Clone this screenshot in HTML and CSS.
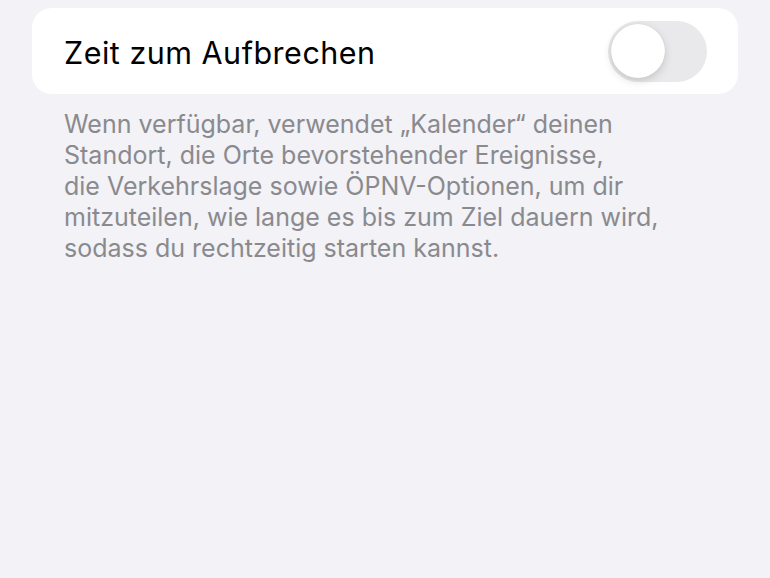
FILE: index.html
```html
<!DOCTYPE html>
<html lang="de">
<head>
<meta charset="utf-8">
<link rel="stylesheet" href="styles.css">
</head>
<body>
<main class="page">
  <section class="card">
    <span class="label">Zeit zum Aufbrechen</span>
    <span class="toggle"><span class="knob"></span></span>
  </section>
  <p class="footer">Wenn verfügbar, verwendet „Kalender“ deinen<br>Standort, die Orte bevorstehender Ereignisse,<br>die Verkehrslage sowie ÖPNV-Optionen, um dir<br>mitzuteilen, wie lange es bis zum Ziel dauern wird,<br>sodass du rechtzeitig starten kannst.</p>
</main>
</body>
</html>
```
FILE: styles.css
```css
html, body {
  margin: 0;
  padding: 0;
  background: #f2f2f7;
}
body {
  font-family: Inter, "Noto Sans", "Liberation Sans", sans-serif;
  width: 770px;
  height: 578px;
  overflow: hidden;
}
.page {
  padding: 8px 32px 0 32px;
}
.card {
  background: #ffffff;
  border-radius: 20px;
  height: 86px;
  padding: 0 31px 0 32px;
  display: flex;
  align-items: center;
  justify-content: space-between;
}
.label {
  font-size: 30.5px;
  color: #000000;
  letter-spacing: 0.5px;
  padding-top: 2px;
}
.toggle {
  width: 99px;
  height: 61px;
  border-radius: 31px;
  background: #e9e9eb;
  display: flex;
  align-items: center;
  padding-left: 3px;
  box-sizing: border-box;
}
.knob {
  width: 54px;
  height: 54px;
  border-radius: 50%;
  background: #ffffff;
  box-shadow: 0 3px 8px rgba(0,0,0,0.15), 0 0 1px rgba(0,0,0,0.15);
}
.footer {
  margin: 15px 0 0 0;
  padding: 0 32px;
  font-size: 25px;
  line-height: 31px;
  color: #8a8a8e;
}
```
